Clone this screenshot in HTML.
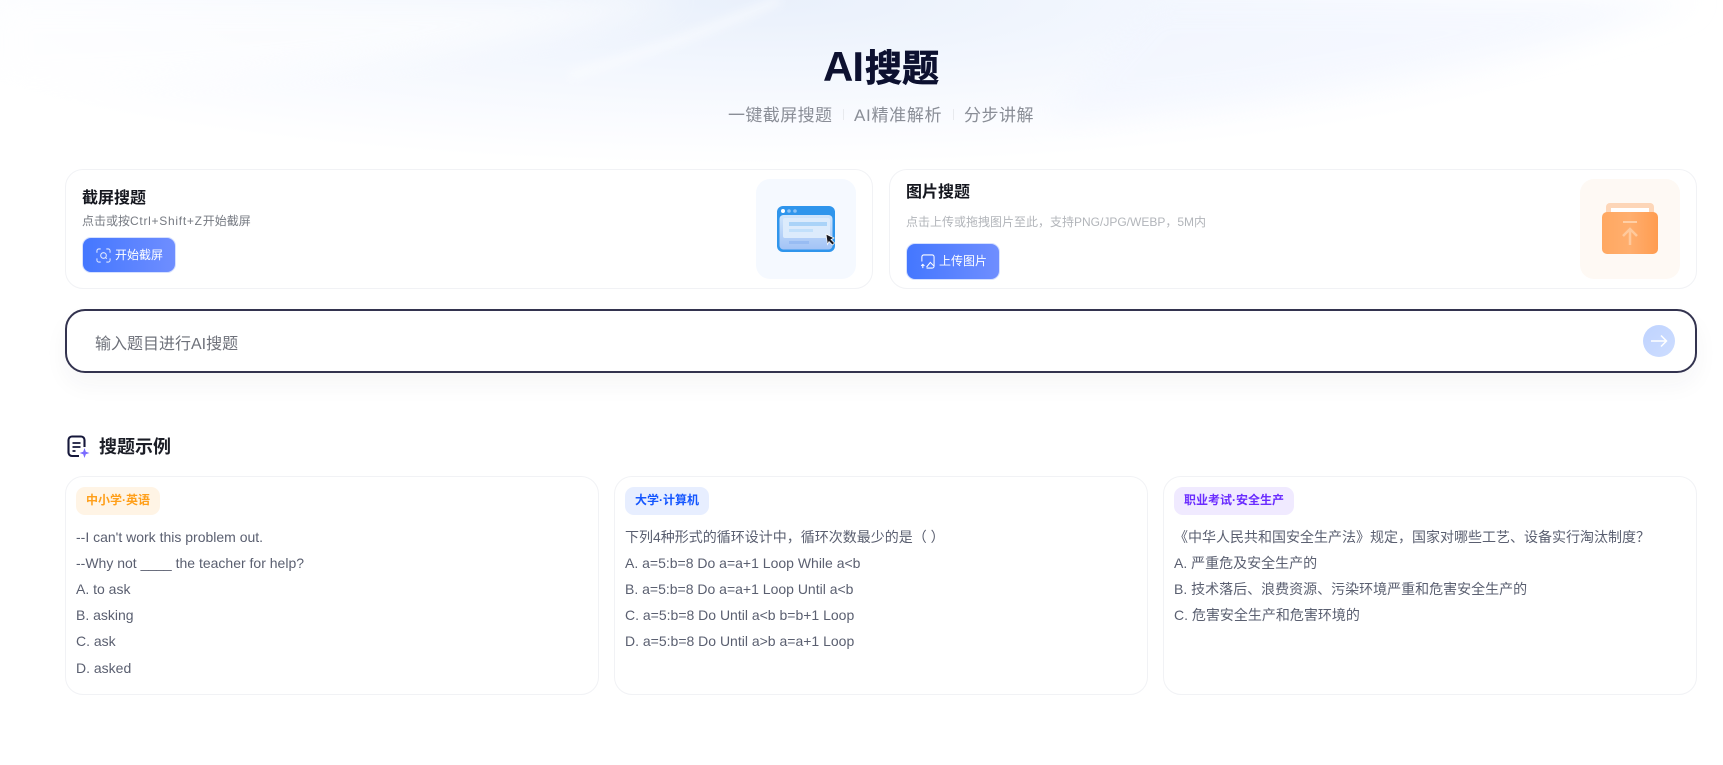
<!DOCTYPE html>
<html lang="zh"><head><meta charset="utf-8"><title>AI搜题</title>
<style>
*{box-sizing:border-box}
html,body{margin:0;padding:0;width:1723px;height:765px;overflow:hidden;background:#fff}
body{position:relative;font-family:"Liberation Sans","Noto Sans CJK SC",sans-serif;color:#4e5569}
.a{position:absolute;white-space:nowrap}
.card{position:absolute;background:#fff;border:1px solid #f1f2f5;border-radius:18px}
.btn{position:absolute;border-radius:9px;background:linear-gradient(90deg,#4477ff,#6f8eff);border:1px solid #d5e0ff;color:#fff;font-size:12px;line-height:34px;}
.ib{position:absolute;width:100px;height:100px;border-radius:14px}
.tag{position:absolute;left:10px;top:10px;height:28px;line-height:27px;border-radius:9px;padding:0 10px;font-size:12px;font-weight:bold}
.body{position:absolute;left:10px;top:46.500px;font-size:14px;line-height:26.200px;color:#5a5f70;white-space:nowrap}
.sub{top:104px;font-size:17px;line-height:24px;color:#8a8e97;letter-spacing:.3px}
.sep{top:109px;width:1px;height:11px;background:#e8eaee}
#bg{left:0;top:0;width:1723px;height:190px;white-space:normal;background:radial-gradient(ellipse 900px 165px at 760px 0,#e9f0fb 0,#f3f7fe 45%,#fbfcff 80%,#fff 100%)}
</style></head><body>
<div class="a" id="bg"></div>
<svg class="a" style="left:0;top:0" width="1723" height="190" viewBox="0 0 1723 190">
<defs>
<filter id="b" x="-20%" y="-50%" width="140%" height="200%"><feGaussianBlur stdDeviation="5"/></filter>
<filter id="b2" x="-20%" y="-50%" width="140%" height="200%"><feGaussianBlur stdDeviation="14"/></filter>
</defs>
<path d="M1050 120C1300 100 1530 60 1700 0H1150C1100 60 1070 90 1050 120Z" fill="#f2f6ff" opacity=".6" filter="url(#b2)"/>
<path d="M0 90C220 85 480 60 690 0H0Z" fill="#fff" opacity=".6" filter="url(#b2)"/>
<path d="M570 75C660 50 720 25 780 0" stroke="#fff" stroke-width="7" fill="none" opacity=".6" filter="url(#b)"/>
</svg>

<div class="a" style="left:823px;top:40px;height:54px;line-height:54px;font-size:37px;font-weight:bold;color:#0d1130"><span style="font-size:42px;margin-right:2px;letter-spacing:-1px">AI</span><span style="-webkit-text-stroke:.7px #0d1130">搜题</span></div>
<div class="a sub" style="left:728px;letter-spacing:.4px">一键截屏搜题</div>
<div class="a sep" style="left:843px"></div>
<div class="a sub" style="left:854px;letter-spacing:.7px">AI精准解析</div>
<div class="a sep" style="left:953px"></div>
<div class="a sub" style="left:964px;letter-spacing:.5px">分步讲解</div>

<div class="card" style="left:65px;top:169px;width:808px;height:120px"></div>
<div class="a" style="left:82px;top:187px;font-size:16px;line-height:24px;font-weight:bold;color:#15171f">截屏搜题</div>
<div class="a" style="left:82px;top:212px;font-size:12px;line-height:18px;color:#767a82">点击或按<span style="letter-spacing:.72px">Ctrl+Shift+Z</span>开始截屏</div>
<div class="btn" style="left:82px;top:237px;width:94px;height:36px">
<svg class="a" style="left:13px;top:10px" width="15" height="15" viewBox="0 0 16 16" fill="none" stroke="#dfe8ff" stroke-width="1.100"><path d="M1 5V3a2 2 0 0 1 2-2h2M11 1h2a2 2 0 0 1 2 2v2M15 11v2a2 2 0 0 1-2 2h-2M5 15H3a2 2 0 0 1-2-2v-2"/><circle cx="8" cy="8" r="3"/><path d="M10 10l1.500 1.500"/></svg>
<span class="a" style="left:32px;top:0">开始截屏</span></div>
<div class="ib" style="left:756px;top:179px;background:#f5f9ff"></div>
<svg class="a" style="left:775px;top:204px" width="64" height="52" viewBox="0 0 64 52">
<defs><linearGradient id="win" x1="0" y1="0" x2="0" y2="1"><stop offset="0" stop-color="#d0e5fb"/><stop offset="1" stop-color="#a3c3f6"/></linearGradient></defs>
<rect x="2" y="2" width="58" height="46" rx="6" fill="#2f95ec"/>
<rect x="4.500" y="11" width="53" height="34.500" rx="4" fill="url(#win)"/>
<circle cx="8" cy="7" r="2" fill="#fff"/><circle cx="14" cy="7" r="1.800" fill="#8cc2f5"/><circle cx="20" cy="7" r="1.800" fill="#8cc2f5"/>
<rect x="8" y="14" width="47" height="20" rx="2" fill="#dcebfc"/>
<rect x="14" y="18" width="38" height="4" fill="#aad3f8"/><rect x="14" y="25" width="24" height="3" fill="#c2e0fb"/>
<rect x="14" y="37" width="20" height="3" fill="#98bcf3"/>
<path d="M51 30l8 4-3 1.500 3.500 3.500-2 2-3.500-3.500-1.500 3z" fill="#1a1a22" stroke="#fff" stroke-width=".7"/>
</svg>

<div class="card" style="left:889px;top:169px;width:808px;height:120px"></div>
<div class="a" style="left:906px;top:181px;font-size:16px;line-height:24px;font-weight:bold;color:#15171f">图片搜题</div>
<div class="a" style="left:906px;top:213px;font-size:12px;line-height:18px;color:#b2b5ba">点击上传或拖拽图片至此，支持PNG/JPG/WEBP，5M内</div>
<div class="btn" style="left:906px;top:243px;width:94px;height:37px">
<svg class="a" style="left:13px;top:10px" width="15" height="15" viewBox="0 0 16 16" fill="none" stroke="#fff" stroke-width="1.100"><path d="M2 8V3a2 2 0 0 1 2-2h9a2 2 0 0 1 2 2v10a2 2 0 0 1-2 2H7"/><path d="M7 14l4-5 4 4"/><path d="M3 15v-4M1.300 12.700L3 11l1.700 1.700"/></svg>
<span class="a" style="left:32px;top:0">上传图片</span></div>
<div class="ib" style="left:1580px;top:179px;background:#fef9f4"></div>
<svg class="a" style="left:1600px;top:202px" width="60" height="54" viewBox="0 0 60 54">
<defs><linearGradient id="or" x1="0" x2="1"><stop offset="0" stop-color="#ffa861"/><stop offset=".5" stop-color="#ffae6e"/><stop offset="1" stop-color="#ff9c50"/></linearGradient></defs>
<path d="M6 14V5a4 4 0 0 1 4-4h40a4 4 0 0 1 4 4v9z" fill="#fdd6b8"/>
<rect x="11" y="6" width="38" height="6" fill="#fff"/>
<rect x="2" y="10" width="56" height="42" rx="5" fill="url(#or)"/>
<path d="M23 20h14" stroke="#ffcfa6" stroke-width="2"/>
<path d="M30 43V27M23 34l7-7 7 7" stroke="#ffc99c" stroke-width="2.500" fill="none"/>
</svg>

<div class="a" style="left:65px;top:309px;width:1632px;height:64px;border:2px solid #33334f;border-radius:20px;background:#fff;box-shadow:0 12px 24px rgba(40,40,60,.045)"></div>
<div class="a" style="left:95px;top:333px;font-size:16px;line-height:24px;color:#6e717a">输入题目进行AI搜题</div>
<div class="a" style="left:1643px;top:325px;width:32px;height:32px;border-radius:50%;background:linear-gradient(135deg,#bfd3ff,#cdddff)"></div>
<svg class="a" style="left:1651px;top:334px" width="17" height="14" viewBox="0 0 17 14" fill="none" stroke="#fff" stroke-width="1.500"><path d="M0 7h15.500M10 1.500L15.500 7 10 12.500"/></svg>

<svg class="a" style="left:67px;top:435px" width="24" height="24" viewBox="0 0 24 24" fill="none">
<path d="M12 21H5a3.500 3.500 0 0 1-3.500-3.500V5A3.500 3.500 0 0 1 5 1.500h9A3.500 3.500 0 0 1 17.500 5v7" stroke="#15173a" stroke-width="2.100"/>
<path d="M5.500 8h8M5.500 12h8M5.500 16h3" stroke="#15173a" stroke-width="1.800"/>
<path d="M17.500 13l1.300 3.700 3.700 1.300-3.700 1.300-1.300 3.700-1.300-3.700-3.700-1.300 3.700-1.300z" fill="#7a6bff"/>
</svg>
<div class="a" style="left:99px;top:434px;font-size:18px;line-height:26px;font-weight:bold;color:#1b1d26">搜题示例</div>

<div class="card" style="left:65px;top:476px;width:534px;height:219px">
<div class="tag" style="background:#fff4e5;color:#ff9f1a">中小学·英语</div>
<div class="body">--I can't work this problem out.<br>--Why not ____ the teacher for help?<br>A. to ask<br>B. asking<br>C. ask<br>D. asked</div></div>
<div class="card" style="left:614px;top:476px;width:534px;height:219px">
<div class="tag" style="background:#e7eeff;color:#1456ff">大学·计算机</div>
<div class="body">下列4种形式的循环设计中，循环次数最少的是（ ）<br>A. a=5:b=8 Do a=a+1 Loop While a&lt;b<br>B. a=5:b=8 Do a=a+1 Loop Until a&lt;b<br>C. a=5:b=8 Do Until a&lt;b b=b+1 Loop<br>D. a=5:b=8 Do Until a&gt;b a=a+1 Loop</div></div>
<div class="card" style="left:1163px;top:476px;width:534px;height:219px">
<div class="tag" style="background:#f0eaff;color:#6a2cff">职业考试·安全生产</div>
<div class="body">《中华人民共和国安全生产法》规定，国家对哪些工艺、设备实行淘汰制度？<br>A. 严重危及安全生产的<br>B. 技术落后、浪费资源、污染环境严重和危害安全生产的<br>C. 危害安全生产和危害环境的</div></div>
</body></html>
